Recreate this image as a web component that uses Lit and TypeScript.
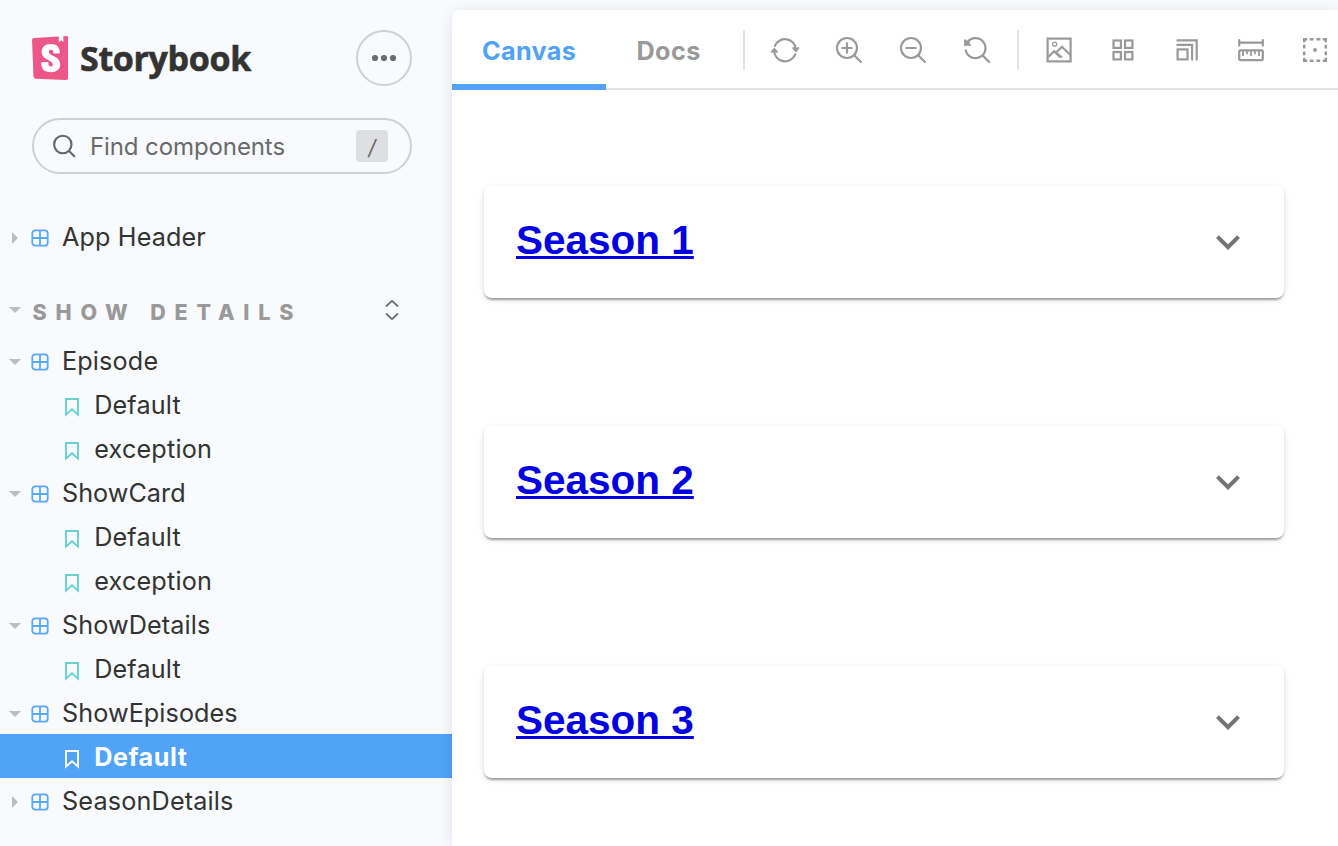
import { LitElement, html, svg, css, TemplateResult } from "lit";
import { customElement, property } from "lit/decorators.js";
import { classMap } from "lit/directives/class-map.js";

type Row = { label: string; kind: "component" | "story"; open?: boolean; selected?: boolean; spacing: string };

const rows: Row[] = [
  { label: "Episode", kind: "component", open: true, spacing: "0.15px" },
  { label: "Default", kind: "story", spacing: "0.15px" },
  { label: "exception", kind: "story", spacing: "0.2px" },
  { label: "ShowCard", kind: "component", open: true, spacing: "0.03px" },
  { label: "Default", kind: "story", spacing: "0.15px" },
  { label: "exception", kind: "story", spacing: "0.2px" },
  { label: "ShowDetails", kind: "component", open: true, spacing: "0.1px" },
  { label: "Default", kind: "story", spacing: "0.15px" },
  { label: "ShowEpisodes", kind: "component", open: true, spacing: "0.08px" },
  { label: "Default", kind: "story", selected: true, spacing: "0.55px" },
  { label: "SeasonDetails", kind: "component", open: false, spacing: "0.17px" },
];

const loupe = svg`<circle cx="12" cy="12" r="10"/><path d="M19.2 19.2l6.8 6.8"/>`;

const tools: Record<string, TemplateResult> = {
  sync: svg`<path d="M3.9 9.9A11 11 0 0 1 25 13.5M24.3 18.2A11 11 0 0 1 3 14.3"/>
    <path class="solid" d="M3.1 11.6l3.9 4-1 1.5-3-1.4-2.3 1.4-1-1.4z"/>
    <path class="solid" d="M25.1 16.4l3.4-4.2-.9-1.4-2.5 1.5-3-1.5-1.1 1.4z"/>`,
  zoomIn: svg`${loupe}<path d="M7.3 12h9.4M12 7.3v9.4"/>`,
  zoomOut: svg`${loupe}<path d="M7.3 12h9.4"/>`,
  zoomReset: svg`<path d="M2.7 14.3A10 10 0 1 0 4.4 6.2M19.4 19.2l6.8 6.8"/>
    <path class="solid" d="M1.1 3.4h2l1.4 2.7 2.2-1 .5 1.2-1.5 1.4 2.2.2v1.5l-.4.4H1.1z"/>`,
  photo: svg`<rect x="2.6" y="2.6" width="23" height="22.8"/><circle cx="9.7" cy="8.2" r="2" stroke-width="1.3"/>
    <path d="M3.2 21l6-5.7 7.8 6.2M11.6 16l5.3-5.3 8.8 8.6M9.2 15.3l6 6" stroke-linecap="butt"/>`,
  grid: svg`<rect x="4.5" y="4.5" width="7.4" height="7.4"/><rect x="16" y="4.5" width="7.4" height="7.4"/>
    <rect x="4.5" y="16" width="7.4" height="7.4"/><rect x="16" y="16" width="7.4" height="7.4"/>`,
  grow: svg`<rect x="4.6" y="13.4" width="9.9" height="10"/><path d="M4.4 4.3h19.3v19.3M4.4 8.9h14.7v14.7"/>`,
  ruler: svg`<path d="M2.2 4v5.6M25.8 4v5.6M2.2 6.7h23.6"/><rect x="2.2" y="14.3" width="23.6" height="9.8" rx="1"/>
    <path d="M6 15v4.2M10 15v2.4M14 15v4.2M18 15v2.4M22 15v4.2" stroke-width="1.8"/>`,
  outline: svg`<path stroke-linecap="butt" d="M6.2 3.2H3.2V6.2M21.8 3.2h3V6.2M6.2 24.8H3.2V21.8M21.8 24.8h3V21.8M8.7 3.2h3.9M15.4 3.2h3.9M8.7 24.8h3.9M15.4 24.8h3.9M3.2 8.7v3.9M3.2 15.4v3.9M24.8 8.7v3.9M24.8 15.4v3.9" stroke-width="2.5"/>
    <circle class="solid" cx="14" cy="14" r="1.9"/>`,
};

@customElement("sb-tool")
class SbTool extends LitElement {
  @property() name = "sync";
  static styles = css`
    :host { display: block; flex: none; width: 28px; height: 28px; color: #999; }
    svg { display: block; fill: none; stroke: currentColor; stroke-width: 2.2; stroke-linecap: round; overflow: visible; }
    .solid { fill: currentColor; stroke: none; }
  `;
  render() {
    return html`<svg width="28" height="28" viewBox="0 0 28 28">${tools[this.name]}</svg>`;
  }
}

@customElement("sb-row")
class SbRow extends LitElement {
  @property({ attribute: false }) row!: Row;
  static styles = css`
    :host { display: block; }
    .row { display: flex; align-items: center; box-sizing: border-box; height: 44px; padding: 4px 0 0 9px; color: #333; font-size: 25.2px; }
    .row.story { padding-left: 64px; }
    .row.selected { background: #50a3f7; color: #fff; font-weight: 700; }
    .caret { flex: none; width: 12px; height: 12px; fill: #bcbdbf; }
    .component { flex: none; width: 18px; height: 18px; margin-left: 10px; fill: none; stroke: #58a8f8; stroke-width: 1.8; }
    .mark { flex: none; width: 16px; height: 20px; fill: none; stroke: #66d0ce; stroke-width: 1.9; margin-top: 2px; }
    .selected .mark { stroke: #fff; }
    .label { line-height: 38px; padding-bottom: 2px; margin-left: 13px; white-space: pre; }
    .story .label { margin-left: 14.2px; }
  `;
  render() {
    const r = this.row;
    const icon = r.kind === "component"
      ? html`<svg class="caret" viewBox="0 0 12 12"><path d=${r.open ? "M0 3h12l-6 6z" : "M3 0l6 6-6 6z"} /></svg>
          <svg class="component" viewBox="0 0 18 18"><rect x="1.3" y="1.3" width="15.4" height="15.4" rx="3"/><path d="M9 1v16M1 9h16"/></svg>`
      : html`<svg class="mark" viewBox="0 0 16 20"><path d="M2 2h12v15.6l-6-5.4-6 5.4z"/></svg>`;
    return html`<div class=${classMap({ row: true, story: r.kind === "story", selected: !!r.selected })}>
      ${icon}<span class="label" style="letter-spacing:${r.spacing}">${r.label}</span>
    </div>`;
  }
}

@customElement("season-card")
class SeasonCard extends LitElement {
  @property() label = "";
  static styles = css`
    :host { display: flex; align-items: center; justify-content: space-between; box-sizing: border-box; width: 800px; height: 112px; padding: 0 32px; border-radius: 8px; background: #fff;
      box-shadow: 0 4px 2px -2px rgba(0,0,0,.2), 0 2px 2px rgba(0,0,0,.14), 0 2px 6px rgba(0,0,0,.12); }
    a { display: block; font: 700 40.5px/48px "Liberation Sans", Arial, sans-serif; color: #0000e0; text-decoration: underline; text-decoration-thickness: 3px; text-underline-offset: 2px; text-decoration-skip-ink: none; padding-bottom: 5px; }
    svg { fill: #757575; }
  `;
  render() {
    return html`<a>${this.label}</a>
      <svg width="48" height="48" viewBox="0 0 24 24"><path d="M16.59 8.59L12 13.17 7.41 8.59 6 10l6 6 6-6z"/></svg>`;
  }
}

@customElement("app-root")
export class AppRoot extends LitElement {
  static styles = css`
    :host { display: flex; box-sizing: border-box; width: 1338px; height: 846px; overflow: hidden; background: #f8fafe; font-family: Inter, "Liberation Sans", sans-serif; }
    .side { flex: none; width: 452px; }
    .brand { display: flex; align-items: center; justify-content: space-between; padding: 30px 40px 0 32px; height: 56px; }
    .logo { display: flex; align-items: center; }
    .logo span { font: 700 34px/44px "Open Sans", sans-serif; letter-spacing: -0.35px; color: #333; -webkit-text-stroke: 0.6px #333; margin-left: 12px; }
    .menu { display: grid; place-items: center; box-sizing: border-box; width: 56px; height: 56px; border: 2px solid #ced0d3; border-radius: 50%; fill: #6b6c6e; }
    .search { display: flex; align-items: center; box-sizing: border-box; width: 380px; height: 56px; margin: 32px 0 0 32px; padding: 0 22px 0 18px; border: 2px solid #ced0d3; border-radius: 28px; color: #696a6c; font-size: 24px; }
    .search .glass { fill: none; stroke: #666; stroke-width: 2.1; stroke-linecap: round; }
    .search .hint { flex: 1; margin-left: 12px; letter-spacing: -0.1px; }
    .key { box-sizing: border-box; width: 32px; height: 32px; padding-top: 2px; text-align: center; border-radius: 4px; background: #dddfe2; font-size: 21px; font-style: italic; line-height: 32px; color: #666; }
    .first { display: block; margin-top: 40px; }
    .group { display: flex; align-items: center; height: 44px; margin-top: 32px; padding: 0 53px 0 9px; }
    .group .caret { fill: #bcbdbf; margin-bottom: 4px; }
    .group .name { flex: 1; margin-left: 11.5px; font-size: 21.5px; font-weight: 800; letter-spacing: 8.82px; color: #999; white-space: pre; }
    .group .expand { fill: none; stroke: #6c6d6f; stroke-width: 1.8; stroke-linecap: round; stroke-linejoin: round; margin-bottom: 4px; }
    .rows { margin-top: 4px; }
    .main { flex: 1; min-width: 0; margin-top: 10px; background: #fff; border-top-left-radius: 8px; box-shadow: 0 2px 14px rgba(0,0,0,.1); }
    .bar { display: flex; box-sizing: border-box; height: 80px; border-bottom: 2px solid #e4e4e4; align-items: flex-start; }
    .tab { box-sizing: border-box; flex: none; height: 80px; font-size: 25.2px; line-height: 82px; font-weight: 700; color: #999; padding-left: 30px; }
    .tab.on { width: 154px; color: #50a3f7; border-bottom: 6px solid #50a3f7; letter-spacing: .35px; }
    .tab.docs { width: 137px; padding-left: 30.5px; letter-spacing: .4px; }
    .sep { flex: none; width: 2px; height: 40px; margin-top: 20px; background: #e4e4e4; }
    .tools { display: flex; gap: 36px; margin: 26px 26px 0; }
    .canvas { display: flex; flex-direction: column; gap: 128px; padding: 96px 0 0 32px; }
  `;
  render() {
    return html`
      <aside class="side">
        <div class="brand">
          <div class="logo">
            <svg width="36" height="44" viewBox="2.35 0 19.2 24" preserveAspectRatio="none">
              <path fill="#fff" d="M6 3h12v17H6zM15.5.5h4v5h-4z"/>
              <path fill="#ec5787" d="M16.71.243l-.12 2.71a.18.18 0 00.29.15l1.06-.8.9.7a.18.18 0 00.28-.14l-.1-2.76 1.33-.1a1.2 1.2 0 011.279 1.2v21.596a1.2 1.2 0 01-1.26 1.2l-16.096-.72a1.2 1.2 0 01-1.15-1.16l-.75-19.797a1.2 1.2 0 011.13-1.27L16.7.222zM13.64 9.3c0 .47 3.16.24 3.59-.08 0-3.2-1.72-4.89-4.859-4.89-3.15 0-4.899 1.72-4.899 4.29 0 4.45 5.999 4.53 5.999 6.959 0 .7-.32 1.1-1.05 1.1-.96 0-1.35-.49-1.3-2.16 0-.36-3.649-.48-3.769 0-.27 4.03 2.23 5.2 5.099 5.2 2.79 0 4.969-1.49 4.969-4.18 0-4.77-6.099-4.64-6.099-6.999 0-.97.72-1.1 1.13-1.1.45 0 1.25.07 1.19 1.87z"/>
            </svg>
            <span>Storybook</span>
          </div>
          <div class="menu"><svg width="28" height="8" viewBox="0 0 28 8"><circle cx="5" cy="4" r="3.1"/><circle cx="14" cy="4" r="3.1"/><circle cx="23" cy="4" r="3.1"/></svg></div>
        </div>
        <div class="search">
          <svg class="glass" width="26" height="26" viewBox="0 0 26 26"><circle cx="10.8" cy="11.5" r="8.7"/><path d="M17 18l5.3 5.2"/></svg>
          <span class="hint">Find components</span>
          <span class="key">/</span>
        </div>
        <sb-row class="first" .row=${{ label: "App Header", kind: "component", open: false, spacing: "0.12px" } as Row}></sb-row>
        <div class="group">
          <svg class="caret" width="12" height="12" viewBox="0 0 12 12"><path d="M0 3h12l-6 6z"/></svg>
          <span class="name">SHOW DETAILS</span>
          <svg class="expand" width="14" height="22" viewBox="0 0 14 22"><path d="M1.5 7L7 1.9 12.5 7M1.5 15L7 20.1l5.5-5.1"/></svg>
        </div>
        <div class="rows">${rows.map((r) => html`<sb-row .row=${r}></sb-row>`)}</div>
      </aside>
      <main class="main">
        <div class="bar">
          <div class="tab on">Canvas</div>
          <div class="tab docs">Docs</div>
          <div class="sep"></div>
          <div class="tools">${["sync", "zoomIn", "zoomOut", "zoomReset"].map((n) => html`<sb-tool name=${n}></sb-tool>`)}</div>
          <div class="sep"></div>
          <div class="tools">${["photo", "grid", "grow", "ruler", "outline"].map((n) => html`<sb-tool name=${n}></sb-tool>`)}</div>
        </div>
        <div class="canvas">
          ${[1, 2, 3].map((n) => html`<season-card label="Season ${n}"></season-card>`)}
        </div>
      </main>`;
  }
}
